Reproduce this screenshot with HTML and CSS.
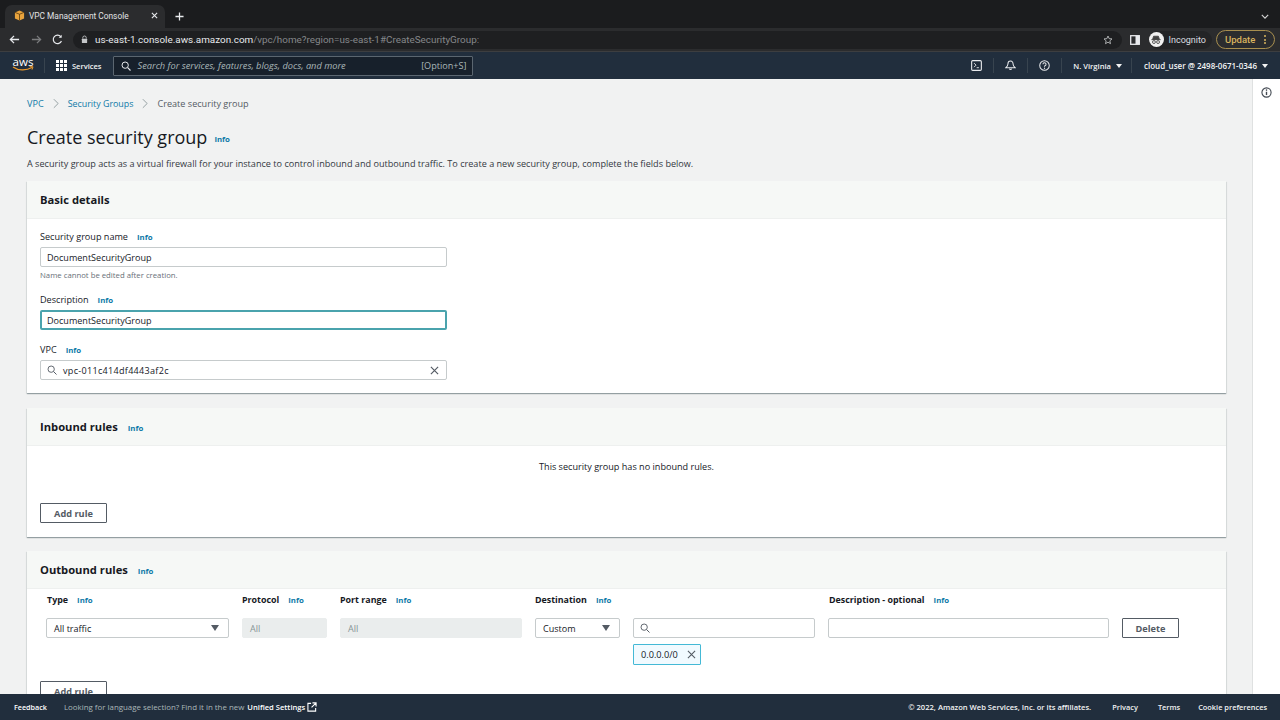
FILE: index.html
```html
<!DOCTYPE html>
<html lang="en">
<head>
<meta charset="utf-8">
<title>VPC Management Console</title>
<link rel="stylesheet" href="styles.css">
</head>
<body>
<div class="tabstrip">
  <div class="tab">
    <svg class="favicon" viewBox="0 0 12 12"><path d="M6 .5 11 2.6v6.8L6 11.5 1 9.4V2.6z" fill="#e8a33d"/><path d="M6 4.6v6.9M1 2.6l5 2 5-2" stroke="#5b3d10" stroke-width=".9" fill="none"/></svg>
    <span class="tab-title">VPC Management Console</span>
    <svg class="tab-x" viewBox="0 0 8 8"><path d="M1 1l6 6M7 1 1 7" stroke="#e8eaed" stroke-width="1.3"/></svg>
  </div>
  <svg class="tab-plus" viewBox="0 0 10 10"><path d="M5 .5v9M.5 5h9" stroke="#e8eaed" stroke-width="1.4"/></svg>
  <svg class="tab-menu" viewBox="0 0 10 6"><path d="M1 1l4 4 4-4" stroke="#d5d5d5" stroke-width="1.4" fill="none"/></svg>
</div>
<div class="toolbar">
  <svg class="tb-icon" viewBox="0 0 12 12"><path d="M11 6H1.5M5.5 2 1.5 6l4 4" stroke="#e8eaed" stroke-width="1.4" fill="none"/></svg>
  <svg class="tb-icon dim" viewBox="0 0 12 12"><path d="M1 6h9.5M6.5 2l4 4-4 4" stroke="#7b7c7e" stroke-width="1.4" fill="none"/></svg>
  <svg class="tb-icon" viewBox="0 0 12 12"><path d="M10.3 7.6A4.6 4.6 0 1 1 9.6 3" stroke="#e8eaed" stroke-width="1.3" fill="none"/><path d="M10.6.8v3.3H7.3z" fill="#e8eaed"/></svg>
  <div class="omnibox">
    <svg class="lock" viewBox="0 0 8 10"><path d="M2 4V3a2 2 0 0 1 4 0v1" stroke="#c4c6c8" fill="none"/><rect x="1" y="4" width="6" height="5" rx=".6" fill="#c4c6c8"/></svg>
    <span class="url-host">us-east-1.console.aws.amazon.com</span><span class="url-path">/vpc/home?region=us-east-1#CreateSecurityGroup:</span>
    <svg class="star" viewBox="0 0 12 12"><path d="M6 1.2 7.4 4.4l3.4.3-2.6 2.3.8 3.4L6 8.6l-3 1.8.8-3.4L1.2 4.7l3.4-.3z" stroke="#c4c6c8" fill="none"/></svg>
  </div>
  <svg class="sidepanel-icon" viewBox="0 0 10 10"><rect x=".7" y=".7" width="8.6" height="8.6" fill="none" stroke="#e8eaed" stroke-width="1.3"/><rect x="5.5" y="1" width="4" height="8" fill="#e8eaed"/></svg>
  <div class="incognito">
    <span class="incog-badge"><svg viewBox="0 0 14 14"><path d="M3 6.3 4.2 2.6h5.6L11 6.3zM1.5 6.6h11" stroke="#444" fill="#444"/><circle cx="4.6" cy="9.4" r="1.7" fill="none" stroke="#444"/><circle cx="9.4" cy="9.4" r="1.7" fill="none" stroke="#444"/></svg></span>
    <span>Incognito</span>
  </div>
  <div class="update"><span>Update</span><span class="dots"><i></i><i></i><i></i></span></div>
</div>
<header class="awsnav">
  <div class="aws-logo"><span>aws</span><svg viewBox="0 0 22 6"><path d="M1 1c5 3.6 13 4 19 .6" stroke="#ec9a2c" stroke-width="1.2" fill="none"/><path d="M17.6 .6 21 .8l-1 2.8" stroke="#ec9a2c" fill="none"/></svg></div>
  <div class="nav-sep first"></div>
  <div class="services">
    <span class="grid-icon"><i></i><i></i><i></i><i></i><i></i><i></i><i></i><i></i><i></i></span>
    <span>Services</span>
  </div>
  <div class="searchbox">
    <svg viewBox="0 0 12 12"><circle cx="5" cy="5" r="3.8" fill="none" stroke="#e8eaed" stroke-width="1.2"/><path d="m8 8 3.4 3.4" stroke="#e8eaed" stroke-width="1.4"/></svg>
    <span class="search-text">Search for services, features, blogs, docs, and more</span>
    <span class="search-key">[Option+S]</span>
  </div>
  <div class="nav-right">
    <svg class="nav-icon" viewBox="0 0 12 12"><rect x=".7" y=".7" width="10.6" height="10.6" rx="1.2" fill="none" stroke="#e8eaed" stroke-width="1.2"/><path d="m3.3 3.4 2.2 2.2-2.2 2.2M6.2 8.4h2.4" stroke="#e8eaed" fill="none"/></svg>
    <div class="nav-sep"></div>
    <svg class="nav-icon" viewBox="0 0 12 12"><path d="M6 1.2c-2 0-2.8 1.5-2.8 3.2 0 2-1 3-2.2 4h10c-1.2-1-2.2-2-2.2-4C8.800 2.700 8 1.200 6 1.200zM4.800 9.500a1.300 1.300 0 0 0 2.400 0" fill="none" stroke="#e8eaed" stroke-width="1.100"/></svg>
    <div class="nav-sep"></div>
    <svg class="nav-icon" viewBox="0 0 12 12"><circle cx="6" cy="6" r="5.200" fill="none" stroke="#e8eaed" stroke-width="1.100"/><path d="M4.300 4.600A1.700 1.700 0 1 1 6.600 6.200C6.100 6.500 6 6.800 6 7.400" fill="none" stroke="#e8eaed" stroke-width="1.100"/><circle cx="6" cy="9" r=".7" fill="#e8eaed"/></svg>
    <div class="nav-sep"></div>
    <span class="nav-item region">N. Virginia<i class="caret"></i></span>
    <div class="nav-sep"></div>
    <span class="nav-item user">cloud_user @ 2498-0671-0346<i class="caret"></i></span>
  </div>
</header>
<div class="main">
  <main class="content">
    <nav class="crumbs">
      <a>VPC</a>
      <svg viewBox="0 0 7 12"><path d="m1 1 5 5-5 5" stroke="#879596" fill="none"/></svg>
      <a>Security Groups</a>
      <svg viewBox="0 0 7 12"><path d="m1 1 5 5-5 5" stroke="#879596" fill="none"/></svg>
      <span>Create security group</span>
    </nav>
    <div class="page-title"><h1>Create security group</h1><a class="info">Info</a></div>
    <p class="page-desc">A security group acts as a virtual firewall for your instance to control inbound and outbound traffic. To create a new security group, complete the fields below.</p>

    <section class="card">
      <div class="card-head basic"><h2>Basic details</h2></div>
      <div class="card-body">
        <div class="label"><span>Security group name</span><a class="info">Info</a></div>
        <div class="input wide">DocumentSecurityGroup</div>
        <div class="hint">Name cannot be edited after creation.</div>
        <div class="label second"><span>Description</span><a class="info">Info</a></div>
        <div class="input wide focused">DocumentSecurityGroup</div>
        <div class="label third"><span>VPC</span><a class="info">Info</a></div>
        <div class="input wide search">
          <svg class="mag" viewBox="0 0 12 12"><circle cx="5" cy="5" r="3.800" fill="none" stroke="#545b64" stroke-width="1.100"/><path d="m8 8 3.400 3.400" stroke="#545b64" stroke-width="1.200"/></svg>
          <span class="vpc-id">vpc-011c414df4443af2c</span>
          <svg class="clear" viewBox="0 0 10 10"><path d="m1 1 8 8M9 1 1 9" stroke="#545b64" stroke-width="1.300"/></svg>
        </div>
      </div>
    </section>

    <section class="card">
      <div class="card-head"><h2>Inbound rules</h2><a class="info">Info</a></div>
      <div class="card-body inbound">
        <p class="empty">This security group has no inbound rules.</p>
        <button class="btn">Add rule</button>
      </div>
    </section>

    <section class="card outbound-card">
      <div class="card-head"><h2>Outbound rules</h2><a class="info">Info</a></div>
      <div class="card-body outbound">
        <div class="rule-grid">
          <div class="col-label shift"><b>Type</b><a class="info">Info</a></div>
          <div class="col-label"><b>Protocol</b><a class="info">Info</a></div>
          <div class="col-label"><b>Port range</b><a class="info">Info</a></div>
          <div class="col-label"><b>Destination</b><a class="info">Info</a></div>
          <div></div>
          <div class="col-label shift"><b>Description - optional</b><a class="info">Info</a></div>
          <div></div>
          <div class="input select"><span>All traffic</span><i class="tri"></i></div>
          <div class="input off">All</div>
          <div class="input off">All</div>
          <div class="input select"><span>Custom</span><i class="tri"></i></div>
          <div class="dest-cell">
            <div class="input search"><svg class="mag" viewBox="0 0 12 12"><circle cx="5" cy="5" r="3.800" fill="none" stroke="#545b64" stroke-width="1.100"/><path d="m8 8 3.400 3.400" stroke="#545b64" stroke-width="1.200"/></svg></div>
            <div class="token"><span>0.0.0.0/0</span><svg viewBox="0 0 10 10"><path d="m1 1 8 8M9 1 1 9" stroke="#545b64" stroke-width="1.200"/></svg></div>
          </div>
          <div class="input"></div>
          <button class="btn delete">Delete</button>
        </div>
        <button class="btn add-out">Add rule</button>
      </div>
    </section>
  </main>
  <aside class="side">
    <svg viewBox="0 0 12 12"><circle cx="6" cy="6" r="5" fill="none" stroke="#414750" stroke-width="1.200"/><path d="M6 5.200v3.600" stroke="#414750" stroke-width="1.500"/><circle cx="6" cy="3.400" r=".9" fill="#414750"/></svg>
  </aside>
</div>
<footer class="foot">
  <span class="foot-link first">Feedback</span>
  <span class="foot-muted">Looking for language selection? Find it in the new</span>
  <span class="foot-link unified">Unified Settings</span>
  <svg class="ext" viewBox="0 0 11 11"><path d="M4.500 1.500H1v8.500h8.500V6.500M6 1h4v4M10 1 5 6" fill="none" stroke="#fff" stroke-width="1.200"/></svg>
  <span class="foot-right">
    <span>© 2022, Amazon Web Services, Inc. or its affiliates.</span>
    <span class="privacy">Privacy</span>
    <span class="terms">Terms</span>
    <span class="cookie">Cookie preferences</span>
  </span>
</footer>
</body>
</html>
```

FILE: styles.css
```css
* { box-sizing: border-box; }
html, body { margin: 0; height: 100%; }
body {
  width: 1280px; height: 720px; overflow: hidden;
  display: flex; flex-direction: column;
  font-family: "Open Sans", "Noto Sans", sans-serif;
  font-size: 9px; color: #16191f; background: #f1f2f2;
}
a { color: #0073bb; }

/* browser */
.tabstrip { height: 28px; flex: none; background: #1b1c1e; display: flex; align-items: flex-end; position: relative; padding-left: 5px; }
.tab { width: 160px; height: 23px; background: #2b2c2e; border-radius: 7px 7px 0 0; display: flex; align-items: center; padding: 0 0 2px 9px; color: #e2e3e5; font: 8.350px Roboto, sans-serif; }
.favicon { width: 11px; height: 11px; margin-right: 4px; flex: none; }
.tab-title { flex: 1; white-space: nowrap; }
.tab-x { width: 7px; height: 7px; margin-right: 7px; }
.tab-plus { width: 9px; height: 9px; margin: 0 0 7px 10px; }
.tab-menu { width: 8px; height: 5px; position: absolute; right: 11px; top: 14px; }
.toolbar { height: 24px; flex: none; background: #2b2c2e; border-bottom: 1px solid #3d3e40; display: flex; align-items: center; padding: 0 5px 0 9px; }
.tb-icon { width: 11px; height: 11px; margin-right: 11px; flex: none; }
.tb-icon:nth-child(3) { margin-left: -1px; }
.omnibox { width: 1049px; height: 18px; margin-left: -1px; background: #1e1f21; border-radius: 9px; display: flex; align-items: center; padding: 0 2px 0 8px; font: 9.900px Roboto, sans-serif; white-space: nowrap; flex: none; }
.omnibox .star { margin-right: 7px; }
.lock { width: 7px; height: 9px; margin-right: 7px; flex: none; }
.url-host { color: #e8eaed; }
.url-path { color: #85878a; }
.star { width: 10px; height: 10px; margin-left: auto; }
.sidepanel-icon { width: 10px; height: 10px; margin-left: auto; flex: none; }
.incognito { display: flex; align-items: center; gap: 5px; margin-left: 9px; height: 18px; padding-right: 6px; border-radius: 9px; background: #232426; color: #dcdde0; font: 9px Roboto, sans-serif; }
.incog-badge { width: 15px; height: 15px; border-radius: 50%; background: #f1f1f1; display: flex; align-items: center; justify-content: center; }
.incog-badge svg { width: 12px; height: 12px; }
.update { width: 59px; height: 19px; margin-left: 4px; border: 1px solid #a88f4f; border-radius: 10px; display: flex; align-items: center; justify-content: space-between; padding: 0 8px 0 8px; color: #d9b45f; font: 500 9.500px Roboto, sans-serif; flex: none; }
.dots { display: flex; flex-direction: column; gap: 1.500px; }
.dots i { width: 2px; height: 2px; border-radius: 50%; background: #d9b45f; display: block; }

/* aws nav */
.awsnav { height: 27px; flex: none; background: #212e3d; display: flex; align-items: center; color: #f2f3f3; padding-left: 12px; }
.aws-logo { width: 22px; color: #fff; font: 400 11.500px/8px "Open Sans", sans-serif; text-align: center; margin-top: -1px; }
.aws-logo svg { width: 22px; height: 6px; display: block; }
.nav-sep { width: 1px; height: 15px; background: #38444f; flex: none; }
.nav-sep.first { margin-left: 10px; }
.services { display: flex; align-items: center; gap: 5px; margin-left: 11px; font: 600 7.500px "Open Sans", sans-serif; }
.grid-icon { display: grid; grid-template-columns: repeat(3, 3px); gap: 1px; width: 11px; }
.grid-icon i { height: 3px; background: #fff; display: block; }
.searchbox { width: 360px; height: 20px; margin-left: 12px; background: #17202b; border: 1px solid #5b6670; border-radius: 1px; display: flex; align-items: center; padding: 0 6px 0 7px; }
.searchbox svg { width: 10px; height: 10px; margin-right: 6px; }
.search-text { color: #aab7b8; font: italic 9.250px "Open Sans", sans-serif; white-space: nowrap; }
.search-key { margin-left: auto; color: #aab7b8; font: 9.100px "Open Sans", sans-serif; }
.nav-right { margin-left: auto; display: flex; align-items: center; padding-right: 12px; }
.nav-icon { width: 11px; height: 11px; margin: 0 11px; }
.nav-item { display: flex; align-items: center; gap: 5px; font: 600 8px "Open Sans", sans-serif; white-space: nowrap; }
.nav-item.region { font-size: 7.600px; padding: 0 9px 0 11px; }
.nav-item.user { padding-left: 12px; }
.caret { width: 0; height: 0; border: 3px solid transparent; border-top: 4px solid #f2f3f3; border-bottom: 0; }

/* main */
.main { flex: 1; min-height: 0; display: flex; overflow: hidden; }
.content { flex: 1; min-width: 0; padding: 17px 26px 0 27px; overflow: hidden; }
.side { width: 28px; flex: none; background: #fff; border-left: 1px solid #dfe1e1; display: flex; justify-content: center; padding-top: 8px; }
.side svg { width: 11px; height: 11px; }
.crumbs { display: flex; align-items: center; height: 14px; font-size: 9.100px; color: #545b64; }
.crumbs a { color: #0f7aa8; }
.crumbs a:nth-of-type(2) { font-size: 8.900px; }
.crumbs svg { width: 6px; height: 11px; margin: 0 9px; }
.page-title { display: flex; align-items: center; margin-top: 14px; height: 25px; }
h1 { margin: 0; font-size: 18px; font-weight: 400; color: #16191f; }
.info { color: #0f7aa8; font-size: 7.800px; font-weight: 700; }
.page-title .info { margin: 4px 0 0 7px; }
.page-desc { margin: 8px 0 0; font-size: 9.100px; line-height: 13px; color: #33383f; white-space: nowrap; }

.card { background: #fff; margin-top: 11px; box-shadow: 0 1px 1px 0 rgba(0,28,36,.3), 1px 1px 1px 0 rgba(0,28,36,.06), -1px 1px 1px 0 rgba(0,28,36,.06); }
.card + .card { margin-top: 15px; }
.card + .outbound-card { margin-top: 14px; }
.card-head { height: 38px; background: #f6f8f6; border-bottom: 1px solid #eef0ef; display: flex; align-items: center; padding: 0 13px 0 13px; }
h2 { margin: 0; font-size: 11.200px; font-weight: 700; color: #16191f; }
.card-head .info { margin: 2px 0 0 10px; }
.card-body { padding: 10px 13px 13px; }
.label { display: flex; align-items: center; height: 15px; font-size: 9.100px; color: #16191f; }
.label .info { margin-left: 9px; }
.label.second { margin-top: 11px; }
.label.third { margin-top: 12px; }
.input { height: 20px; background: #fff; border: 1px solid #c6cbcc; border-radius: 2px; display: flex; align-items: center; padding: 0 6px; font-size: 9.050px; color: #16191f; margin-top: 3px; }
.input.wide { width: 407px; }
.input.focused { border: 2px solid #4aa3ad; padding: 0 5px; }
.hint { font-size: 7.750px; color: #687078; margin-top: 3px; height: 11px; }
.search .mag { width: 10px; height: 10px; margin-right: 6px; flex: none; }
.search .clear { width: 9px; height: 9px; margin-left: auto; margin-right: 1px; }
.vpc-id { letter-spacing: .3px; }
.inbound { padding: 14px 13px 14px; height: 91px; }
.inbound .btn { margin-top: 29px; }
.empty { margin: 0; text-align: center; font-size: 9.100px; line-height: 14px; color: #16191f; }
.btn { height: 20px; width: 67px; padding: 0; background: #fff; border: 1px solid #545b64; border-radius: 1px; color: #545b64; font: 700 9.200px "Open Sans", sans-serif; display: block; }
.outbound { padding: 3px 13px 0; height: 105px; overflow: hidden; }
.rule-grid { display: grid; grid-template-columns: 183px 85px 182px 85px 182px 281px 57px; column-gap: 13px; padding-left: 6px; grid-template-rows: 15px auto; row-gap: 11px; }
.col-label { display: flex; align-items: center; font-size: 8.900px; white-space: nowrap; }
.col-label.shift { padding-left: 1px; }
.col-label b { font-weight: 700; }
.col-label .info { margin-left: 9px; }
.rule-grid .input { margin-top: 0; padding: 0 7px; }
.select { justify-content: space-between; }
.tri { width: 0; height: 0; border: 4px solid transparent; border-top: 6px solid #545b64; border-bottom: 0; margin-right: 2px; }
.off { background: #eaeded; border-color: #eaeded; color: #879596; }
.dest-cell { display: flex; flex-direction: column; align-items: flex-start; gap: 6px; }
.rule-grid .dest-cell .input { width: 100%; padding: 0 6px; }
.token { height: 21px; width: 68px; background: #f1faff; border: 1px solid #44b9d6; border-radius: 1px; display: flex; align-items: center; justify-content: space-between; padding: 0 4px 0 7px; font-size: 9.200px; }
.token svg { width: 9px; height: 9px; }
.delete { width: 57px; }
.add-out { margin-top: 16px; }

/* footer */
.foot { height: 26px; flex: none; background: #212e3d; color: #e8eaed; display: flex; align-items: center; font: 7.900px "Open Sans", sans-serif; padding: 0 13px 0 14px; white-space: nowrap; position: relative; }
.foot-link { color: #fff; font-weight: 600; font-size: 7.600px; }
.foot-link.first { font-size: 7.200px; }
.foot-muted { color: #aab7b8; margin-left: 17px; }
.unified { margin-left: 3px; }
.ext { width: 10px; height: 10px; margin-left: 2px; }
.foot-right { margin-left: auto; display: flex; align-items: center; font-weight: 600; font-size: 7.600px; color: #f2f3f3; }
.privacy, .terms, .cookie { font-size: 7.400px; }
.privacy { margin-left: 21px; }
.terms { margin-left: 20px; }
.cookie { margin-left: 18px; }
```
